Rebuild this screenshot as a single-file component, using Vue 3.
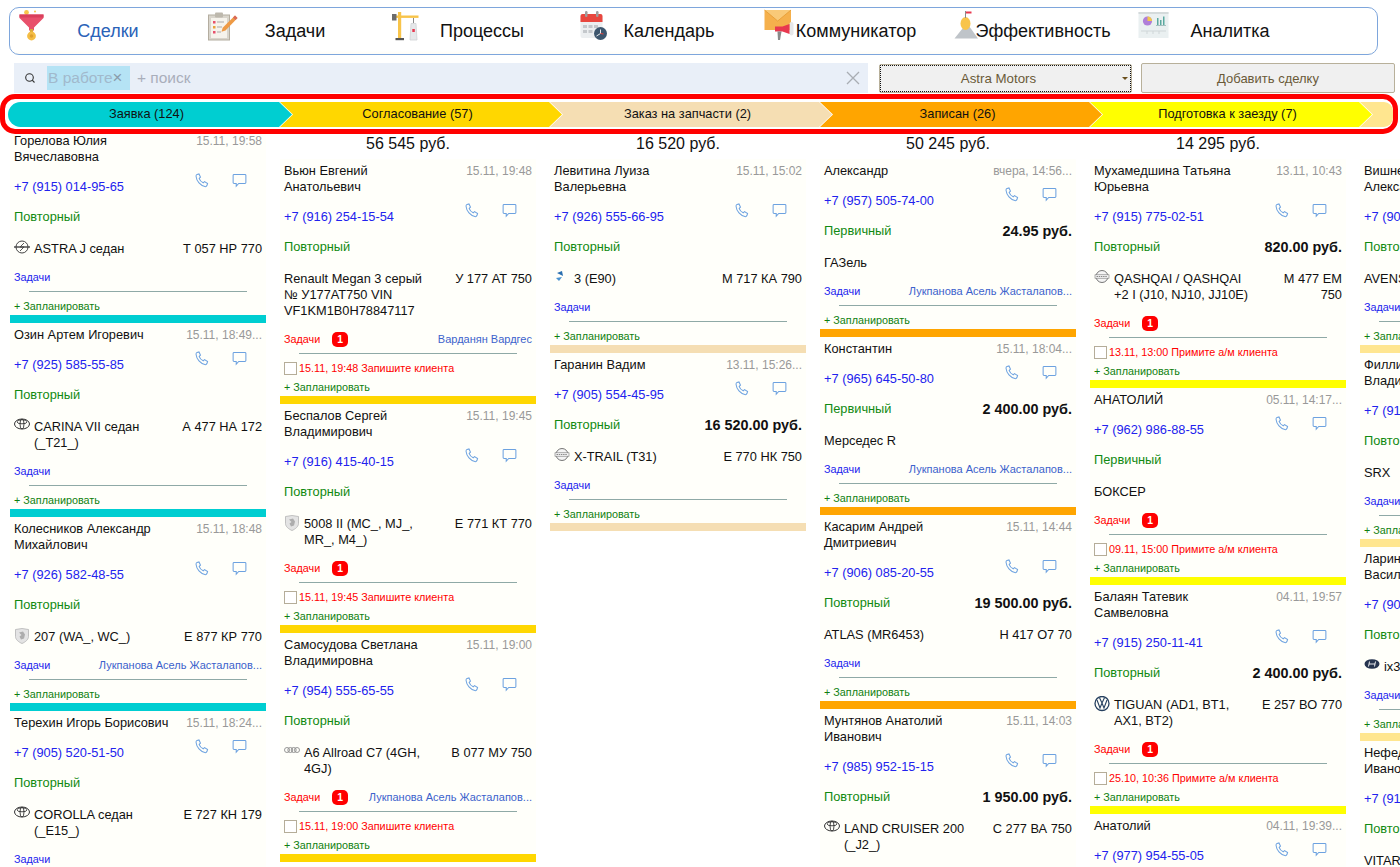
<script setup>
const navItems = ["Сделки", "Задачи", "Процессы", "Календарь", "Коммуникатор", "Эффективность", "Аналитка"]

const stages = [
  { title: "Заявка (124)", color: "#00ced1" },
  { title: "Согласование (57)", color: "#ffd700" },
  { title: "Заказ на запчасти (2)", color: "#f5deb3" },
  { title: "Записан (26)", color: "#ffa500" },
  { title: "Подготовка к заезду (7)", color: "#ffff00" },
  { title: "", color: "#ffe68f" }
]

const owner = "Лукпанова Асель Жасталапов..."

const columns = [
  {
    color: "#00ced1", sum: "",
    cards: [
      { name: "Горелова Юлия Вячеславовна", date: "15.11, 19:58", phone: "+7 (915) 014-95-65", status: "Повторный", logo: "opel", car: "ASTRA J седан", plate: "Т 057 НР 770" },
      { name: "Озин Артем Игоревич", date: "15.11, 18:49...", phone: "+7 (925) 585-55-85", status: "Повторный", logo: "toyota", car: "CARINA VII седан (_T21_)", plate: "А 477 НА 172" },
      { name: "Колесников Александр Михайлович", date: "15.11, 18:48", phone: "+7 (926) 582-48-55", status: "Повторный", logo: "peugeot", car: "207 (WA_, WC_)", plate: "Е 877 КР 770", owner },
      { name: "Терехин Игорь Борисович", date: "15.11, 18:24...", phone: "+7 (905) 520-51-50", status: "Повторный", logo: "toyota", car: "COROLLA седан (_E15_)", plate: "Е 727 КН 179" }
    ]
  },
  {
    color: "#ffd700", sum: "56 545 руб.",
    cards: [
      { name: "Вьюн Евгений\nАнатольевич", date: "15.11, 19:48", phone: "+7 (916) 254-15-54", status: "Повторный", car: "Renault Megan 3 серый № У177АТ750 VIN VF1KM1B0H78847117", plate: "У 177 АТ 750", badge: 1, owner: "Варданян Вардгес", todo: "15.11, 19:48 Запишите клиента" },
      { name: "Беспалов Сергей Владимирович", date: "15.11, 19:45", phone: "+7 (916) 415-40-15", status: "Повторный", logo: "peugeot", car: "5008 II (MC_, MJ_, MR_, M4_)", plate: "Е 771 КТ 770", badge: 1, todo: "15.11, 19:45 Запишите клиента" },
      { name: "Самосудова Светлана Владимировна", date: "15.11, 19:00", phone: "+7 (954) 555-65-55", status: "Повторный", logo: "audi", car: "A6 Allroad C7 (4GH, 4GJ)", plate: "В 077 МУ 750", badge: 1, owner, todo: "15.11, 19:00 Запишите клиента" }
    ]
  },
  {
    color: "#f5deb3", sum: "16 520 руб.",
    cards: [
      { name: "Левитина Луиза Валерьевна", date: "15.11, 15:02", phone: "+7 (926) 555-66-95", status: "Повторный", logo: "bmw", car: "3 (E90)", plate: "М 717 КА 790" },
      { name: "Гаранин Вадим", date: "13.11, 15:26...", phone: "+7 (905) 554-45-95", status: "Повторный", price: "16 520.00 руб.", logo: "nissan", car: "X-TRAIL (T31)", plate: "Е 770 НК 750" }
    ]
  },
  {
    color: "#ffa500", sum: "50 245 руб.",
    cards: [
      { name: "Александр", date: "вчера, 14:56...", phone: "+7 (957) 505-74-00", status: "Первичный", price: "24.95 руб.", car: "ГАЗель", plate: "", owner },
      { name: "Константин", date: "15.11, 18:04...", phone: "+7 (965) 645-50-80", status: "Первичный", price: "2 400.00 руб.", car: "Мерседес R", plate: "", owner },
      { name: "Касарим Андрей Дмитриевич", date: "15.11, 14:44", phone: "+7 (906) 085-20-55", status: "Повторный", price: "19 500.00 руб.", car: "ATLAS (MR6453)", plate: "Н 417 О7 70" },
      { name: "Мунтянов Анатолий Иванович", date: "15.11, 14:03", phone: "+7 (985) 952-15-15", status: "Повторный", price: "1 950.00 руб.", logo: "toyota", car: "LAND CRUISER 200 (_J2_)", plate: "С 277 ВА 750" }
    ]
  },
  {
    color: "#ffff00", sum: "14 295 руб.",
    cards: [
      { name: "Мухамедшина Татьяна Юрьевна", date: "13.11, 10:43", phone: "+7 (915) 775-02-51", status: "Повторный", price: "820.00 руб.", logo: "nissan", car: "QASHQAI / QASHQAI +2 I (J10, NJ10, JJ10E)", plate: "М 477 ЕМ 750", badge: 1, todo: "13.11, 13:00 Примите а/м клиента" },
      { name: "АНАТОЛИЙ", date: "05.11, 14:17...", phone: "+7 (962) 986-88-55", status: "Первичный", car: "БОКСЕР", plate: "", badge: 1, todo: "09.11, 15:00 Примите а/м клиента" },
      { name: "Балаян Татевик Самвеловна", date: "04.11, 19:57", phone: "+7 (915) 250-11-41", status: "Повторный", price: "2 400.00 руб.", logo: "vw", car: "TIGUAN (AD1, BT1, AX1, BT2)", plate: "Е 257 ВО 770", badge: 1, todo: "25.10, 10:36 Примите а/м клиента" },
      { name: "Анатолий", date: "04.11, 19:39...", phone: "+7 (977) 954-55-05", status: "Повторный", car: "", plate: "" }
    ]
  },
  {
    color: "#ffe68f", sum: "",
    offset: true,
    cards: [
      { name: "Вишневский\nАлександр", date: "", phone: "+7 (903) 412-18-20", status: "Повторный", car: "AVENSIS", plate: "" },
      { name: "Филлипов\nВладимир", date: "", phone: "+7 (915) 330-72-14", status: "Повторный", car: "SRX", plate: "" },
      { name: "Ларин\nВасилий", date: "", phone: "+7 (903) 560-44-19", status: "Повторный", logo: "hyundai", car: "ix35", plate: "" },
      { name: "Нефедов\nИванович", date: "", phone: "+7 (916) 247-30-88", status: "Повторный", car: "VITARA", plate: "" }
    ]
  }
]
</script>

<template>
  <div class="page">
    <nav class="nav">
      <a v-for="(item, i) in navItems" :key="item" class="nav-item" :class="{ active: i === 0 }">
        <svg class="nav-icon" viewBox="0 0 36 32">
          <g v-if="i === 0">
            <circle cx="10.5" cy="3.5" r="2.4" fill="#f8c44a" />
            <circle cx="19" cy="2.5" r="1" fill="#f8c44a" />
            <circle cx="15" cy="7" r="1" fill="#f8c44a" />
            <path d="M3.5 5.5h24v3.5l-9.5 9.5v3h-5v-3L3.5 9z" fill="#e8506b" />
            <path d="M3.5 5.5h24v3h-24z" fill="#d93f5c" />
            <rect x="14" y="20" width="3" height="3" fill="#d9a93a" />
            <circle cx="15.5" cy="27" r="4.4" fill="#f4bd45" />
            <circle cx="15.5" cy="27" r="1.8" fill="#dfa02f" />
          </g>
          <g v-else-if="i === 1">
            <rect x="5.5" y="6" width="21" height="25" fill="#d9d5cc" stroke="#b4ada0" />
            <rect x="8" y="9" width="16" height="20" fill="#f6f3ec" />
            <rect x="12" y="3.5" width="8" height="5" rx="1" fill="#bdb8ad" />
            <rect x="10" y="12" width="2.5" height="2.5" fill="#e8506b" />
            <rect x="10" y="17" width="2.5" height="2.5" fill="#e8a23c" />
            <rect x="10" y="22" width="2.5" height="2.5" fill="#e8506b" />
            <path d="M14 13h7M14 18h5M14 23h4" stroke="#a8a8a8" stroke-width="1.2" />
            <path d="M32 6.5l2.5 2.5-12 12.5-4 1.3 1.2-4z" fill="#ee9a45" />
            <path d="M32 6.5l2.5 2.5-2 2-2.5-2.500z" fill="#d9695b" />
          </g>
          <g v-else-if="i === 2">
            <rect x="8" y="3" width="3.2" height="26" fill="#f8c44a" />
            <rect x="2" y="6.500" width="26.500" height="2.400" fill="#f8c44a" />
            <rect x="2" y="5" width="4.500" height="6.500" fill="#6c6c6c" />
            <rect x="5.500" y="29" width="8.500" height="2.200" fill="#555" />
            <path d="M23.500 9v5" stroke="#8a8a8a" />
            <path d="M21 14.500h5l1 16.500h-7z" fill="#e6e8ea" stroke="#cfd2d4" stroke-width=".8" />
            <rect x="22.300" y="20" width="2.500" height="3" fill="#e8384f" />
          </g>
          <g v-else-if="i === 3">
            <rect x="3.500" y="5" width="22" height="24" rx="2" fill="#eceff1" />
            <path d="M3.500 7a2 2 0 0 1 2-2h18a2 2 0 0 1 2 2v6h-22z" fill="#e8473f" />
            <rect x="8" y="2" width="2.500" height="6" rx="1.200" fill="#9e9e9e" />
            <rect x="19" y="2" width="2.500" height="6" rx="1.200" fill="#9e9e9e" />
            <path d="M6 16h4v3h-4zM11.500 16h4v3h-4zM17 16h4v3h-4zM6 21h4v3h-4zM11.500 21h4v3h-4z" fill="#c4c8cc" />
            <circle cx="23.500" cy="24.500" r="6.500" fill="#3d566e" />
            <path d="M23.500 20.500v4l-4 2.500" stroke="#e9edf0" stroke-width="1" fill="none" />
            <path d="M23.500 24.500l3 .500" stroke="#e8473f" stroke-width="1" />
          </g>
          <g v-else-if="i === 4">
            <rect x=".5" y="1" width="26.500" height="20" fill="#f5b04c" />
            <path d="M.5 1l13.200 11L27 1" fill="#f9c978" stroke="#e59b32" stroke-width=".8" />
            <rect x="25.500" y="13" width="4" height="13.500" rx="2" fill="#e6e8ea" />
            <path d="M25.500 15v10l-7-2.500h-7.500v-5h7.500z" fill="#e8384f" />
            <path d="M13.500 22.500h4l-1.500 8.500h-2z" fill="#8a8a8a" />
          </g>
          <g v-else-if="i === 5">
            <path d="M13.500 17l-10 12.500h23.500l-9-12.500z" fill="#bfc4c9" />
            <ellipse cx="14.500" cy="14.500" rx="5" ry="6.500" fill="#f8c44a" />
            <path d="M14.500 2v7" stroke="#8a8a8a" />
            <path d="M15 2.500h5.500v2h-5.500z" fill="#e8384f" />
          </g>
          <g v-else>
            <rect x=".5" y="3" width="30" height="26" fill="#eaf0f1" />
            <rect x=".5" y="3" width="30" height="2" fill="#d4dadb" />
            <circle cx="9.500" cy="12" r="4.600" fill="#b07fd8" />
            <path d="M9.500 12V7.400a4.600 4.600 0 0 1 4.600 4.600z" fill="#f4c64a" />
            <path d="M19 16V9h1.500v7zM22 16v-5h1.500v5zM25 16V7.500h1.500V16z" fill="#5aa9a0" />
            <path d="M18 16.500h10" stroke="#8aa" stroke-width=".7" />
            <path d="M3 22h25" stroke="#cfd6d8" />
            <path d="M9 22v3M15 22v3M21 22v3" stroke="#cfd6d8" />
          </g>
        </svg>
        <span class="nav-text">{{ item }}</span>
      </a>
    </nav>

    <div class="toolbar">
      <div class="search">
        <svg class="loupe" viewBox="0 0 12 12">
          <circle cx="5.500" cy="5.500" r="3.800" fill="none" stroke="#333" stroke-width="1.100" />
          <path d="M8.200 8.200l2.300 2.300" stroke="#333" stroke-width="1.100" />
        </svg>
        <span class="tag">В работе<b>×</b></span>
        <span class="search-hint">+ поиск</span>
        <svg class="clear" viewBox="0 0 14 14">
          <path d="M1 1l12 12M13 1L1 13" stroke="#a9adb3" stroke-width="1.300" />
        </svg>
      </div>
      <button class="select"><span>Astra Motors</span><i></i></button>
      <button class="add">Добавить сделку</button>
    </div>

    <div class="pipeline">
      <div
        v-for="(s, i) in stages"
        :key="i"
        class="stage"
        :class="{ first: i === 0, last: i === stages.length - 1 }"
        :style="{ background: s.color }"
      >{{ s.title }}</div>
    </div>

    <div class="board">
      <div v-for="col in columns" :key="col.color" class="col">
        <div v-if="col.sum || col.offset" class="sum">{{ col.sum }}</div>
        <div v-for="c in col.cards" :key="c.phone" class="card">
          <div class="row-name">
            <div class="name">{{ c.name }}</div>
            <div class="date">{{ c.date }}</div>
          </div>
          <div class="row-phone">
            <span class="phone">{{ c.phone }}</span>
            <svg class="act act-phone" viewBox="0 0 16 16">
              <path d="M3.200 1.500L5.300 1l1.600 3.400-1.400 1.300c.6 1.900 2.300 3.900 4.300 4.800l1.400-1.300 3.300 2-.7 2.200c-.4.900-1.300 1.300-2.200 1.100C6.800 13.300 2.800 8.900 2.200 3.700c-.1-1 .2-1.800 1-2.200z" fill="none" stroke="#6da2e0" stroke-width="1.100" />
            </svg>
            <svg class="act act-chat" viewBox="0 0 16 16">
              <path d="M2.200 1.500h11.600c.6 0 1 .4 1 1v7.600c0 .6-.4 1-1 1H7.200l-2.700 3v-3H2.200c-.6 0-1-.4-1-1V2.500c0-.6.400-1 1-1z" fill="none" stroke="#6da2e0" stroke-width="1.100" />
            </svg>
          </div>
          <div class="row-status">
            <span class="status">{{ c.status }}</span>
            <b v-if="c.price" class="price">{{ c.price }}</b>
          </div>
          <div class="row-car">
            <svg v-if="c.logo" class="logo" viewBox="0 0 16 16">
              <g v-if="c.logo === 'opel'">
                <circle cx="8" cy="7" r="6" fill="none" stroke="#444" stroke-width="1" />
                <path d="M0 7h16" stroke="#444" stroke-width="1.400" />
                <path d="M10 3L6 7h4l-4 4" fill="none" stroke="#444" stroke-width=".9" />
              </g>
              <g v-else-if="c.logo === 'toyota'">
                <ellipse cx="8" cy="6" rx="7.500" ry="5" fill="none" stroke="#333" stroke-width="1" />
                <ellipse cx="8" cy="6" rx="2" ry="5" fill="none" stroke="#333" stroke-width=".9" />
                <ellipse cx="8" cy="3.800" rx="5" ry="2" fill="none" stroke="#333" stroke-width=".9" />
              </g>
              <g v-else-if="c.logo === 'peugeot'">
                <path d="M1.500 1.500L8 .5l6.500 1v7c0 3-3 5.500-6.500 7-3.500-1.500-6.500-4-6.500-7z" fill="#e4e4e4" stroke="#b4b4b4" stroke-width=".8" />
                <path d="M5 4.500l4-1 2 3-1 4-3 1-1.500-3 2-1.500z" fill="#adadad" />
              </g>
              <g v-else-if="c.logo === 'audi'">
                <g fill="none" stroke="#8c8c8c" stroke-width=".9">
                  <circle cx="3" cy="6" r="2.500" /><circle cx="6.300" cy="6" r="2.500" /><circle cx="9.700" cy="6" r="2.500" /><circle cx="13" cy="6" r="2.500" />
                </g>
              </g>
              <g v-else-if="c.logo === 'bmw'">
                <path d="M3 3l5-2 1 5z" fill="#2a6fb0" />
                <path d="M2 8l6-1-3 4z" fill="#4a92d0" />
              </g>
              <g v-else-if="c.logo === 'nissan'">
                <circle cx="8" cy="6.500" r="6" fill="#f4f4f4" stroke="#666" stroke-width=".9" />
                <rect x="1" y="4.800" width="14" height="3.400" fill="#f4f4f4" stroke="#777" stroke-width=".6" />
                <path d="M2.500 6.500h11" stroke="#888" stroke-width="1" stroke-dasharray="1.500 .7" />
              </g>
              <g v-else-if="c.logo === 'vw'">
                <circle cx="8" cy="7.500" r="7" fill="none" stroke="#26405f" stroke-width="1.300" />
                <path d="M3 4l3 8 2-5 2 5 3-8M5.500 1.800L8 7l2.500-5.200" fill="none" stroke="#26405f" stroke-width="1.100" />
              </g>
              <g v-else>
                <ellipse cx="8" cy="6" rx="7.500" ry="4.800" fill="#26344f" />
                <path d="M5.500 3.500l-1 5M11.500 3.500l-1 5M5 6h6" stroke="#fff" stroke-width=".9" />
              </g>
            </svg>
            <div class="car" :class="{ narrow: c.logo }">{{ c.car }}</div>
            <div class="plate">{{ c.plate }}</div>
          </div>
          <div class="row-tasks">
            <span class="tasks" :class="{ late: c.badge }">Задачи</span>
            <span v-if="c.badge" class="badge">{{ c.badge }}</span>
            <span v-if="c.owner" class="owner">{{ c.owner }}</span>
          </div>
          <div class="line"></div>
          <div v-if="c.todo" class="todo">
            <span class="check"></span>
            <span>{{ c.todo }}</span>
          </div>
          <div class="plan">+ Запланировать</div>
          <div class="bar" :style="{ background: col.color }"></div>
        </div>
      </div>
    </div>
  </div>
</template>

<style>
html,
body {
  margin: 0;
  height: 867px;
  overflow: hidden;
  background: #fff;
}
</style>

<style scoped>
.page {
  width: 1400px;
  height: 867px;
  overflow: hidden;
  font-family: "Liberation Sans", Arial, sans-serif;
  color: #111;
}

.nav {
  display: flex;
  box-sizing: border-box;
  width: 1369px;
  height: 48px;
  margin: 7px 0 0 9px;
  padding: 0 0 0 4.5px;
  border: 1px solid #7ea6dc;
  border-radius: 10px;
  background: linear-gradient(#fff 92%, #fffdf6);
}
.nav-item {
  display: flex;
  align-items: center;
  width: 187px;
  flex: none;
  font-size: 18px;
  color: #111;
}
.nav-item.active {
  color: #2a62b8;
}
.nav-icon {
  flex: none;
  align-self: flex-start;
  width: 36px;
  height: 32px;
  margin: 1px -37px 0 1px;
}
.nav-text {
  flex: 1;
  text-align: center;
  padding-top: 1px;
}

.toolbar {
  display: flex;
  align-items: flex-start;
  height: 31px;
  margin: 8px 0 0 14px;
}
.search {
  display: flex;
  align-items: center;
  box-sizing: border-box;
  width: 854px;
  height: 30px;
  padding: 0 8px 0 10px;
  background: #e9eff8;
}
.loupe {
  width: 12px;
  height: 12px;
  margin-right: 11px;
}
.tag {
  display: flex;
  align-items: center;
  box-sizing: border-box;
  width: 83px;
  height: 24px;
  padding-left: 1px;
  background: #b5e3f5;
  color: #a1b9cc;
  font-size: 15.500px;
}
.tag b {
  font-weight: normal;
  font-size: 17px;
  color: #8a9cab;
}
.search-hint {
  flex: 1;
  margin-left: 7px;
  font-size: 15.500px;
  color: #a9aebb;
}
.clear {
  width: 14px;
  height: 14px;
}
.select,
.add {
  box-sizing: border-box;
  margin: 0;
  padding: 0;
  font-family: inherit;
  font-size: 13px;
  color: #6a5a38;
  background: #f0f0f0;
  border: 1px solid #b8b09a;
  border-radius: 2px;
}
.select {
  display: flex;
  align-items: center;
  width: 253px;
  height: 29px;
  margin: 1px 0 0 11px;
  font-size: 13.300px;
  outline: 1px dotted #111;
  outline-offset: -2px;
}
.select span {
  flex: 1;
  padding-right: 5px;
  padding-bottom: 1px;
  text-align: center;
}
.select i {
  width: 0;
  height: 0;
  margin-right: 3px;
  border: 3px solid transparent;
  border-top: 3px solid #6a4f1c;
  border-bottom: 0;
}
.add {
  width: 254px;
  height: 30px;
  margin-left: 9px;
}

.pipeline {
  position: relative;
  z-index: 2;
  display: flex;
  box-sizing: border-box;
  width: 1398px;
  height: 40px;
  margin-bottom: -5px;
  padding: 3px 0 2px 3px;
  border: 5px solid #f00;
  border-radius: 15px;
  background: #fff;
}
.stage {
  flex: none;
  box-sizing: border-box;
  width: 282px;
  height: 25px;
  margin-right: -12px;
  padding-right: 7px;
  font-size: 12.800px;
  line-height: 23px;
  text-align: center;
  clip-path: polygon(0 0, calc(100% - 13px) 0, 100% 50%, calc(100% - 13px) 100%, 0 100%, 13px 50%);
}
.stage.first {
  width: 284px;
  border-radius: 13px 0 0 13px;
  clip-path: polygon(0 0, calc(100% - 13px) 0, 100% 50%, calc(100% - 13px) 100%, 0 100%);
}
.stage.last {
  flex: 1;
  width: auto;
  margin-right: 0;
  border-radius: 0 9px 9px 0;
  clip-path: polygon(0 0, 100% 0, 100% 100%, 0 100%, 13px 50%);
}

.board {
  display: flex;
  gap: 14px;
  padding-left: 10px;
  width: 1700px;
}
.col {
  flex: none;
  width: 256px;
}
.sum {
  height: 30px;
  padding-top: 6px;
  box-sizing: border-box;
  font-size: 16px;
  line-height: 18px;
  text-align: center;
}
.card {
  background: #fffffa;
  font-size: 12.800px;
  line-height: 16px;
}
.row-name {
  display: flex;
  justify-content: space-between;
  padding: 4px 4px 0;
  margin-bottom: 7px;
}
.name {
  flex: 1;
  min-width: 0;
  white-space: pre-line;
}
.date {
  flex: none;
  width: 80px;
  font-size: 12px;
  color: #999;
  text-align: right;
  white-space: nowrap;
}
.row-phone {
  display: flex;
  height: 30px;
  padding: 0 4px;
}
.phone {
  flex: 1;
  line-height: 30px;
  color: #2222ee;
}
.act {
  flex: none;
  width: 15px;
  height: 15px;
  margin-top: 1px;
}
.act-chat {
  margin: 1px 15px 0 23px;
}
.row-status {
  display: flex;
  justify-content: space-between;
  height: 30px;
  padding: 0 4px;
  line-height: 30px;
}
.status {
  color: #118a11;
}
.price {
  font-size: 14.400px;
}
.row-car {
  display: flex;
  padding: 9px 4px 0;
}
.logo {
  flex: none;
  width: 16px;
  height: 16px;
  margin-right: 4px;
  margin-top: -1px;
}
.car {
  flex: 1;
  min-width: 0;
  padding-right: 14px;
}
.car.narrow {
  padding-right: 10px;
}
.plate {
  flex: none;
  width: 82px;
  text-align: right;
}
.row-tasks {
  display: flex;
  align-items: center;
  height: 18px;
  margin-top: 11px;
  padding: 0 4px;
  font-size: 10.800px;
}
.tasks {
  color: #2222ee;
}
.tasks.late {
  color: #f00;
}
.badge {
  width: 16px;
  height: 15px;
  margin-left: 12px;
  border-radius: 5px;
  background: #f00;
  color: #fff;
  font-size: 10.400px;
  font-weight: bold;
  line-height: 15px;
  text-align: center;
}
.owner {
  margin-left: auto;
  font-size: 11px;
  color: #3c62cc;
  white-space: nowrap;
}
.line {
  height: 1px;
  margin: 5px 19px 0;
  background: #8fa9a6;
}
.todo {
  display: flex;
  align-items: center;
  height: 14px;
  margin-top: 7px;
  padding: 0 4px;
  font-size: 10.800px;
  color: #f00;
}
.check {
  box-sizing: border-box;
  width: 13px;
  height: 13px;
  margin-right: 2px;
  border: 1px solid #b5ad98;
  background: #fff;
}
.plan {
  height: 14px;
  padding: 7px 4px 2px;
  font-size: 10.800px;
  line-height: 14px;
  color: #0f7f0f;
}
.todo + .plan {
  padding-top: 5px;
}
.bar {
  height: 8px;
}
</style>
